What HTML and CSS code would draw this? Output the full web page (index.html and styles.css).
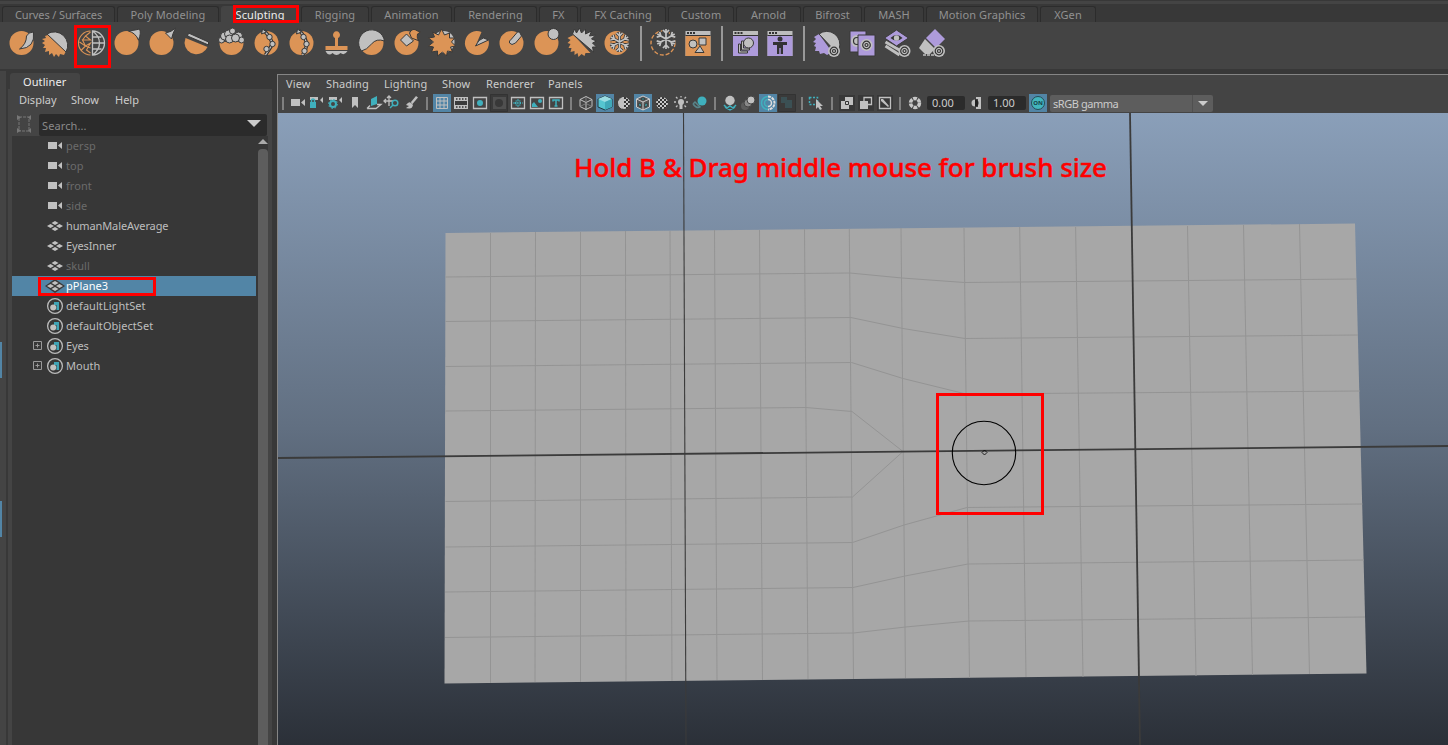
FILE: index.html
```html
<!DOCTYPE html>
<html lang="en"><head><meta charset="utf-8"><title>Sculpting workspace</title>
<link rel="stylesheet" href="styles.css"></head>
<body>
<svg class="defs" width="0" height="0">
<defs>
<pattern id="chk" width="4" height="4" patternUnits="userSpaceOnUse"><rect width="4" height="4" fill="#333"/><rect width="2" height="2" fill="#c8c8c8"/><rect x="2" y="2" width="2" height="2" fill="#c8c8c8"/></pattern>
<g id="ball"><circle r="12" class="o"/></g>
<g id="flake" fill="none"><path d="M0-10V10M-8.700-5L8.700 5M-8.700 5L8.700-5M-3-9L0-6 3-9M-3 9L0 6 3 9M-9.300-1.900L-5.200-3-6.300-7.100M9.300 1.900L5.200 3 6.300 7.100M-9.300 1.900L-5.200 3-6.300 7.100M9.300-1.900L5.200-3 6.300-7.100"/></g>
<g id="target"><circle r="6" class="g"/><circle r="3.800" class="n"/><circle r="1.500" class="n"/></g>
<g id="win"><rect x="-12.500" y="-12" width="25" height="25" fill="#bdbdbd"/><path d="M-12.500-7.500h25" stroke="#333"/><path d="M-11-10h2M-8-10h2M-5-10h2" stroke="#333" stroke-width="2"/></g>
<g id="cam"><path d="M0 0h9v7H0zM14 0v7l-4-3.500z" class="g"/></g>
<g id="mesh"><path d="M8 0l3.500 2L8 4 4.500 2zM3.500 3L7 5 3.500 7 0 5zM12.500 3L16 5l-3.500 2L9 5zM8 6l3.500 2L8 10 4.500 8z" class="g"/></g>
<g id="set"><circle cx="8" cy="8" r="7.400" fill="none" stroke="#bbb" stroke-width="1.300"/><path d="M7 4h5v8H9.500V7H7z" fill="#3fa3b5"/><circle cx="6.200" cy="9.500" r="3" class="g"/></g>
</defs></svg>

<div class="app">
<div class="topline"></div>
<nav class="tabs">
<div class="t1">Curves / Surfaces</div><div class="t2">Poly Modeling</div><div class="t3 on">Sculpting</div><div class="t4">Rigging</div><div class="t5">Animation</div><div class="t6">Rendering</div><div class="t7">FX</div><div class="t8">FX Caching</div><div class="t9">Custom</div><div class="t10">Arnold</div><div class="t11">Bifrost</div><div class="t12">MASH</div><div class="t13">Motion Graphics</div><div class="t14">XGen</div>
</nav>

<div class="shelf">
<svg viewBox="-17.500 -17 35 34"><use href="#ball"/><path d="M12-11Q14 5-2 6Q5 1 5-7Q7-11 12-11Z" class="g k"/></svg>
<svg viewBox="-17 -17 35 34"><path d="M-8-8-11-7-10-5-14-4-11-2-14 0-11 2-13 5-10 5-11 9-7 8-7 12-4 10-2 14 0 11 3 14 4 11 8 12 10 8z" class="o"/><path d="M-9-9A13.500 13.500 0 0 1 10 9Z" class="g k"/></svg>
<svg viewBox="-17.500 -17 35 34"><path d="M-1-12A12 12 0 0 0-1 12M-1-11-6-7-1-3-9-3-6 3-1 0-5 7-1 10M-12-1-6 3-10 7M-6-7-9-3M-6 3-1 5" class="ol fine"/><path d="M1-12A12 12 0 0 1 1 12ZM1-6H10M1 0H13M1 6H10M1-12Q8-7 8 0T1 12" class="gl"/></svg>
<svg viewBox="-17.500 -17 35 34"><use href="#ball"/><path d="M2-12Q10-13 13-14Q15-10 12-3Q9-10 2-12Z" class="g k"/></svg>
<svg viewBox="-17.500 -17 35 34"><use href="#ball"/><path d="M4-10Q10-11 14-15Q11-9 10-4Z" class="g k"/></svg>
<svg viewBox="-17.500 -17 35 34"><path d="M-11-5 11 4A12 12 0 0 1-12 0Z" class="o"/><path d="M-8-10 12-1V2L-9-7Z" class="g k"/></svg>
<svg viewBox="-17.500 -17 35 34"><use href="#ball"/><path d="M-13-1-12-14H12L13-1Z" fill="#444"/><g class="g k"><circle cx="-10" cy="-3" r="3"/><circle cx="-7" cy="-7" r="4"/><circle cx="7" cy="-7" r="4"/><circle cx="10" cy="-3" r="3"/><circle cx="-3" cy="-9" r="4"/><circle cx="1" cy="-12" r="3"/><circle cx="-2" cy="-4" r="4"/><circle cx="4" cy="-5" r="4"/></g></svg>
<svg viewBox="-17.500 -17 35 34"><use href="#ball"/><path d="M-3-13Q4-6 6 1Q3 6-1 12" class="dark wide"/><path d="M-3-13Q4-6 6 1Q3 6-1 12" class="gl"/><g class="g k"><path d="M-4-14-5-9 0-11z"/><circle cx="3" cy="-6" r="2.700"/><circle cx="6" cy="1" r="2.700"/><circle cx="0" cy="6" r="2.700"/></g></svg>
<svg viewBox="-17.500 -17 35 34"><use href="#ball"/><path d="M-3-13Q3-8 5 0Q5 7 1 12" class="dark wide"/><path d="M-3-13Q3-8 5 0Q5 7 1 12" class="gl"/><g class="g k"><path d="M-4-14-5-9 0-11z"/><circle cx="2" cy="-6" r="2.700"/><circle cx="5" cy="1" r="2.700"/><circle cx="3" cy="8" r="2.700"/></g></svg>
<svg viewBox="-17.500 -17 35 34"><path d="M-1.500-5A3.500 3.500 0 1 1 1.500-5V3H11V7H-11V3H-1.500Z" class="o"/><path d="M-11 8H11Q8 13 4 10Q0 14-4 10Q-8 14-11 8Z" class="g"/></svg>
<svg viewBox="-17.500 -17 35 34"><use href="#ball"/><path d="M-10 8A13 13 0 1 1 13-2Q5-5 0 1T-10 8Z" class="g k"/></svg>
<svg viewBox="-17.500 -17 35 34"><use href="#ball"/><path d="M0-9 7-2 0 3-6-3Z" class="g k"/><path d="M3-10Q6-16 11-12L14-11 11-9Q10-3 13-2L5-5Z" class="o k"/></svg>
<svg viewBox="-17.500 -17 35 34"><circle r="11" cx="2" cy="-1" class="g"/><path d="M0-14 3-8 8-10 8-5 13-5 10-1 14 3 9 4 11 9 6 8 5 13 1 9-4 13-4 8-10 9-8 4-13 3-8-1-13-5-7-6-9-11-3-8Z" class="o k"/></svg>
<svg viewBox="-17.500 -17 35 34"><path d="M5-11A12 12 0 1 0 12-3L-1 3Z" class="o"/><path d="M-1 3Q2-4 7-5L12-3Z" class="g k"/></svg>
<svg viewBox="-17.500 -17 35 34"><use href="#ball"/><path d="M8-11 10-7 4 0Q0 3-2 0-3-2 0-4L6-11Z" class="g k"/></svg>
<svg viewBox="-17.500 -17 35 34"><use href="#ball"/><circle cx="7" cy="-9" r="5.500" class="g k"/></svg>
<svg viewBox="-17.500 -17 35 34"><path d="M-8-8-14-5-11-3-14 0-11 1-13 5-10 5-11 9-7 8-7 12-4 10-3 14 0 11 3 13 4 10 9 10Z" class="o"/><path d="M-9-9-7-14-5-10-2-15 0-10 4-14 4-9 10-12 8-7 14-8 10-4 15-2 11 0 15 4 11 4 12 9Z" class="g k"/></svg>
<svg viewBox="-17.500 -17 35 34"><use href="#ball"/><use href="#flake" x="3" y="-1" stroke="#333" stroke-width="3"/><use href="#flake" x="3" y="-1" stroke="#c3c3c3" stroke-width="1.500"/></svg>
<i class="s s1"></i>
<svg class="w34" viewBox="-17 -17 34 34"><circle cx="-2" cy="0" r="12" class="ol" stroke-dasharray="4 2"/><use href="#flake" x="1" y="-4" stroke="#444" stroke-width="3.500"/><use href="#flake" x="1" y="-4" stroke="#c3c3c3" stroke-width="1.700"/></svg>
<svg class="w32" viewBox="-16 -17 32 34"><use href="#win"/><path d="M-12.500-7h25V13h-25z" class="o"/><g class="g k"><circle cx="-5" cy="1" r="4"/><path d="M1-5H8V2H1ZM2 3 6 9.500H-3Z"/></g></svg>
<i class="s s2"></i>
<svg class="w31" viewBox="-15.500 -17 31 34"><use href="#win"/><path d="M-12.500-7h25V13h-25z" class="p"/><path d="M-7 10V1H-5V8H2V10ZM-4 7V-2H-2V5H4V7Z" class="g k"/><circle cx="3" cy="0" r="5" class="g k"/></svg>
<svg class="w38" viewBox="-19 -17 38 34"><use href="#win"/><path d="M-12.500-7h25V13h-25z" class="p"/><circle cy="-4" r="2.500" fill="#333"/><path d="M-7-1H7V2H3V11H.700V5H-.700V11H-3V2H-7Z" fill="#333"/></svg>
<i class="s s3"></i>
<svg class="w38" viewBox="-18 -17 38 34"><path d="M-8-9-13-6-11-4-14-1-11 0-13 3-11 4-12 8-8 8-7 11-3 10 0 12 5 9Z" class="p"/><path d="M-8-9A13 13 0 0 1 12 6L8 8Z" class="g k"/><use href="#target" x="7" y="8"/></svg>
<svg class="w32" viewBox="-15 -17 32 34"><path d="M-12-12H4V9H-12Z" class="p k"/><circle cx="-5" cy="-2" r="6" class="g"/><circle cx="-5" cy="-2" r="3.500" class="n"/><path d="M-4-8H13V13H-4Z" class="p k"/><use href="#target" x="4.500" y="2"/></svg>
<svg viewBox="-17.500 -17 35 34"><path d="M-11-1 8 10M-11 3 3 12" stroke="#c0c0c0" stroke-width="3"/><path d="M0-13 12-5 0 3-12-5Z" class="p k"/><path d="M-6-5Q0-11 6-5Q0 0-6-5" fill="#333"/><circle cy="-5" r="2.700" class="g"/><use href="#target" x="8" y="8"/></svg>
<svg class="w38" viewBox="-18 -17 38 34"><path d="M3-14 13-4 4 5-6-5Z" class="p"/><path d="M-7-4 3 6-2 11H-7L-13 5Z" class="g"/><path d="M-9 12H4" class="gl" stroke-dasharray="3 1"/><use href="#target" x="7" y="8"/></svg>
</div>

<div class="main">
<div class="sliver"><b class="b1"></b><b class="b2"></b></div>
<aside class="outliner">
<div class="otitle">Outliner</div>
<div class="obody">
<div class="omenu"><span class="d1">Display</span><span class="d2">Show</span><span>Help</span></div>
<div class="search"><svg width="27" height="22"><path d="M7 3h10v14H7z" fill="none" stroke="#777" stroke-dasharray="3 1"/><path d="M5 1l4 2.500-4 2.500zM19 1v5l-3-2.500zM5 14l4 2.500-4 2.500zM19 14v5l-3-2.500z" fill="#777"/></svg><div class="box">Search...<i></i></div></div>
<div class="olist"><div class="rows">
<div class="row dim"><svg><use href="#cam" x="1" y="6"/></svg>persp</div>
<div class="row dim"><svg><use href="#cam" x="1" y="6"/></svg>top</div>
<div class="row dim"><svg><use href="#cam" x="1" y="6"/></svg>front</div>
<div class="row dim"><svg><use href="#cam" x="1" y="6"/></svg>side</div>
<div class="row tight"><svg><use href="#mesh" y="5"/></svg>humanMaleAverage</div>
<div class="row tight"><svg><use href="#mesh" y="5"/></svg>EyesInner</div>
<div class="row dim"><svg><use href="#mesh" y="5"/></svg>skull</div>
<div class="row sel"><svg><path d="M8 3 18 10 8 17-2 10Z" fill="#3a3a3a"/><use href="#mesh" y="5"/></svg>pPlane3</div>
<div class="row"><svg><use href="#set" y="2"/></svg>defaultLightSet</div>
<div class="row"><svg><use href="#set" y="2"/></svg>defaultObjectSet</div>
<div class="row tight"><svg><path d="M-13.500 5.500h8v8h-8zM-11.500 9.500h4M-9.500 7.500v4" class="plus"/><use href="#set" y="2"/></svg>Eyes</div>
<div class="row"><svg><path d="M-13.500 5.500h8v8h-8zM-11.500 9.500h4M-9.500 7.500v4" class="plus"/><use href="#set" y="2"/></svg>Mouth</div>
</div><div class="scroll"><i></i><b></b></div></div>
</div>
</aside>

<section class="view">
<div class="vmenu"><span class="m1">View</span><span class="m2">Shading</span><span class="m3">Lighting</span><span class="m4">Show</span><span class="m5">Renderer</span><span class="m6">Panels</span></div>
<div class="vtools">
<i class="sep first"></i>
<svg><use href="#cam" x="3" y="6"/></svg>
<svg><path d="M3 4h8v3H3zM16 4v6l-3-3z" class="g"/><path d="M3 9h6v6H3z" fill="#3fb0bd"/><path d="M4.500 9V7q1.500-2 3 0v2" class="cl"/></svg>
<svg><path d="M3 4h8v3H3zM16 4v6l-3-3z" class="g"/><circle cx="7" cy="11" r="3" fill="#444" stroke="#3fb0bd" stroke-width="2"/><circle cx="7" cy="11" r="4.500" fill="none" stroke="#3fb0bd" stroke-dasharray="1.500 2"/></svg>
<svg><path d="M7 4h6v11l-3-3-3 3z" class="g"/></svg>
<svg><path d="M7 13V6l6-3v8z" fill="#3fb0bd"/><path d="M3 15.500h9l5-4h-4M3 15.500l3-3" class="gl"/></svg>
<svg><path d="M1 8h9M6 3v10M3 6 1 8l2 2M4 5l2-2 2 2" class="gl"/><circle cx="12" cy="10" r="2.800" class="cl"/><path d="M10 12 7 15" class="cl"/></svg>
<svg><path d="M9 9 14 3l2 1.500-6 7z" class="g"/><path d="M4 12q3-4 5-2l2 2q-1 4-4 3.500T4 15l3-2z" class="g"/></svg>
<i class="sep"></i>
<svg class="act"><path d="M4.500 4.500h11v11h-11zM8 4v12M12 4v12M4 8h12M4 12h12" class="gl thinl"/></svg>
<svg><path d="M3 4h14v12H3z" class="g"/><path d="M4 8h12v4H4z" fill="#3b3b3b"/><path d="M5 6h11M5 14h11" stroke="#333" stroke-width="1.500" stroke-dasharray="1.500 1.500"/></svg>
<svg><path d="M3.500 4.500h13v11h-13z" class="gl"/><circle cx="10" cy="10" r="3" fill="#3fb0bd"/></svg>
<svg><path d="M1.500 1.500h17v17h-17z" fill="#3a3a3a" stroke="#333"/><path d="M4 4h13v12H4z" fill="#505050"/><circle cx="10" cy="10" r="4" fill="#383838"/></svg>
<svg><path d="M3.500 4.500h13v11h-13z" class="gl"/><path d="M5 10h10M10 6v8M7.500 8h5v4h-5z" fill="none" stroke="#3fb0bd" stroke-dasharray="2 1"/></svg>
<svg><path d="M3.500 4.500h13v11h-13z" class="gl"/><circle cx="13" cy="8" r="2" fill="#3fb0bd"/><path d="M5 14V11l2-2 4 5z" fill="#3fb0bd"/></svg>
<svg><path d="M3.500 4.500h13v11h-13z" class="gl"/><path d="M7 8.500V7h6v1.500M10 7v6M8.500 13h3" fill="none" stroke="#3fb0bd" stroke-width="1.500"/></svg>
<i class="sep"></i>
<svg><path d="M4 6.500 10 3.500l6 3v7l-6 3-6-3zM4 6.500l6 3 6-3M10 9v8" fill="none" stroke="#c0c0c0"/><path d="M10 4v6M4 13.500l6-3 6 3" fill="none" stroke="#888" stroke-width=".800"/></svg>
<svg class="act"><path d="M3 6l7-3 7 3v8l-7 3-7-3z" fill="#55c5d0" stroke="#22383f"/><path d="M3 6l7-3 7 3-7 3z" fill="#9bdde3"/><path d="M10 9v8l7-3V6z" fill="#3fa8b8"/></svg>
<svg><circle cx="10" cy="10" r="6" fill="url(#chk)"/><path d="M10 4a6 6 0 0 0 0 12z" class="g"/></svg>
<svg class="act"><path d="M3.500 6l6.500-3 6.500 3v8l-6.500 3-6.500-3z" fill="#555" stroke="#ccc"/><path d="M3.500 6l6.500 3 6.500-3M10 9v8" fill="none" stroke="#ccc"/><path d="M8 6l2-1 2 1-2 1zM6 10l2 1v3l-2-1zM14 10l-2 1v3l2-1z" fill="#4bbac7" stroke="#222" stroke-width=".600"/></svg>
<svg><circle cx="10" cy="10" r="6" fill="url(#chk)"/></svg>
<svg><circle cx="10" cy="9" r="3" class="g"/><path d="M8.500 11h3v5h-3z" class="g"/><path d="M10 3v1.500M5 4l1.500 1.500M15 4l-1.500 1.500M3 9h2M17 9h-2M5 14l1.500-1.500M15 14l-1.500-1.500" class="gl"/></svg>
<svg><circle cx="12" cy="8" r="4.500" fill="#3fb0bd"/><path d="M3 11l2-2 5 5q-3 2-7-3" fill="none" stroke="#58858b" stroke-width="1.500"/></svg>
<i class="sep"></i>
<svg><path d="M4 12l3 3 3-2 3 2 3-3M5 14l5 3 5-3" class="cl"/><circle cx="10" cy="7.500" r="4.700" class="g"/></svg>
<svg><circle cx="6" cy="13" r="4" fill="#5c5c5c"/><circle cx="9" cy="10" r="4" fill="#888" stroke="#444"/><circle cx="12" cy="7" r="4" class="g" stroke="#444"/></svg>
<svg class="act"><path d="M10 3.500a6.500 6.500 0 0 0 0 13" class="cl"/><path d="M10 3.500a6.500 6.500 0 0 1 0 13" stroke="#ddd" fill="none" stroke-width="2" stroke-dasharray="3 .800"/><path d="M10 6.500a3.500 3.500 0 0 0 0 7" class="cl"/><path d="M10 6.500a3.500 3.500 0 0 1 0 7" stroke="#ddd" fill="none" stroke-width="1.500"/></svg>
<svg><path d="M1.500 1.500h17v17h-17z" fill="#3a3a3a" stroke="#333"/><path d="M4 4h6v3h5v8H8V10H4z" fill="#3b5054"/></svg>
<i class="sep"></i>
<svg><path d="M2.500 4.500h8v7h-8z" class="cl" stroke-dasharray="2 1.500"/><path d="M9 6l7 7-3 0 2 3-2 1-2-3-2 2z" class="g"/></svg>
<i class="sep"></i>
<svg><path d="M2 2h16v16H2z" fill="#383838"/><path d="M8 4h8v8H8zM4 8h8v8H4z" class="g"/><path d="M8.500 8.500h3v3h-3z" fill="#ccc" stroke="#333"/></svg>
<svg><path d="M2 2h16v16H2z" fill="#383838"/><path d="M8 4.500h7.500v7H8z" class="gl"/><path d="M4 8h8v8H4z" class="g"/></svg>
<svg><path d="M2 2h16v16H2z" fill="#383838"/><path d="M4.500 4.500h11v11h-11z" class="gl"/><path d="M6 6h2l6 7-1 1-7-6z" class="g"/></svg>
<i class="sep"></i>
<svg><circle cx="10" cy="10" r="4.500" fill="none" stroke="#c8c8c8" stroke-width="3.500" stroke-dasharray="3.800 .900"/></svg>
<div class="num">0.00</div>
<svg class="con"><path d="M10 4h5v12h-5v-2h2V6h-2z" class="g"/><path d="M9 6.500a3.500 3.500 0 0 1 0 7z" fill="#222"/><path d="M9 6.500a3.500 3.500 0 0 0 0 7z" class="g"/></svg>
<div class="num">1.00</div>
<div class="onbtn"><span>ON</span></div>
<div class="combo"><span>sRGB gamma</span><i></i></div>
</div>

<svg class="canvas" viewBox="278 113 1170 632">
<defs><linearGradient id="sky" x1="0" y1="0" x2="0" y2="1"><stop offset="0" stop-color="#8a9fb9"/><stop offset=".5" stop-color="#616f81"/><stop offset="1" stop-color="#2b3038"/></linearGradient></defs>
<path d="M278 113h1170v632H278z" fill="url(#sky)"/>
<path d="M445.500 233 1355 223.500 1366.500 673.500 444.500 683.500Z" fill="#a7a7a7"/>
<path d="M490.500 233V683M535.500 232 535 682M580.500 232V682M625.500 231 626 681M670 231 672 681M714.500 230 717 680M759.500 230 762.500 680M804.500 229 808 679M849.300 229 853.500 679M901 228 905.500 678M964 228 969.500 678M1019.700 227 1026 677M1075.600 227 1083 677M1131.500 226 1139.500 676M1187.500 226 1196 676M1243.500 225 1252.500 675M1299.500 224 1309.500 674" class="wire"/>
<path d="M445.500 277 850 273 902 278 964.500 282.500 1357 279M445.500 321.500 851 317.500 903 328.500 965 338.500 1358 335M445.500 366.500 851.500 362.500 903 378.500 966 394 1360 391M445.500 411 806 407.500 852 411.500 903 451.500 852.500 497 445.500 501.500M445.500 547 852.500 542.500 904 525 967 507.500 1362.500 504M445 592 853 587.500 905 576 968 564 1364 560M445 637.500 853.500 633 905.500 627 969 621 1365 617" class="wire"/>
<path d="M278 458 1448 446" class="axis"/><path d="M1130 113 1140 745" class="axis"/><path d="M683.500 113 686 745" class="axis thin"/>
<circle cx="984" cy="453" r="31.700" fill="none" stroke="#000" stroke-width="1.100"/><path d="M984.500 450 987 452.500 984.500 455 982 452.500Z" fill="none" stroke="#000" stroke-width=".8"/>
<path d="M937.500 394.500h105v119h-105z" fill="none" stroke="#f00" stroke-width="3"/>
<text x="574" y="177" textLength="533" class="tip">Hold B &amp; Drag middle mouse for brush size</text>
</svg>
</section>
</div>
<div class="mark k1"></div><div class="mark k2"></div><div class="mark k3"></div>
</div>
</body></html>
```

FILE: styles.css
```css
*{box-sizing:border-box}
body{margin:0;background:#383838;font:11px "Noto Sans",sans-serif;color:#bebebe;overflow:hidden}
.defs{position:absolute}
.app{position:relative;width:1448px;height:745px;display:flex;flex-direction:column}
.topline{height:4px;background:#444;border-top:1px solid #383838;flex:none}
.tabs{height:18px;padding:2px 0 0 2px;display:flex;gap:2px;flex:none;background:#383838}
.tabs div{height:16px;line-height:15px;text-align:center;white-space:nowrap;background:#3b3b3b;color:#919191;border:1px solid #2c2c2c;border-bottom:0;border-radius:3px 3px 0 0;letter-spacing:.1px}
.tabs .t1{letter-spacing:-.12px}
.tabs .on{background:#444;color:#eee;border-color:#444}
.t1{width:113px}.t2{width:102px}.t3{width:78px}.t4{width:68px}.t5{width:81px}.t6{width:83px}.t7{width:39px}.t8{width:86px}.t9{width:66px}.t10{width:65px}.t11{width:59px}.t12{width:60px}.t13{width:112px}.t14{width:56px}
.shelf{height:47px;flex:none;background:#444;display:flex;padding:4px 0 0 4px}
.shelf svg{width:35px;height:34px;flex:none;overflow:visible}
.shelf .w34{width:34px}.shelf .w32{width:32px}.shelf .w31{width:31px}.shelf .w38{width:38px}
.s{display:flex;justify-content:center;height:35px}
.s:before{content:"";width:2px;height:35px;background:#999}
.s1{width:14px}.s2{width:16px}.s3{width:10px}
.o{fill:#dc9456}.g{fill:#c0c0c0}.p{fill:#ae9bdb}.k{stroke:#393939;stroke-width:1}
.n{fill:none;stroke:#333;stroke-width:1.2}
.ol{fill:none;stroke:#dc9456;stroke-width:1.4}
.fine{stroke-width:1.1}
.gl{fill:none;stroke:#c0c0c0;stroke-width:1.3}
.thinl{stroke-width:1}
.cl{fill:none;stroke:#3fb0bd;stroke-width:1.5}
.dark{fill:none;stroke:#333;stroke-width:2}
.wide{stroke-width:3.5}
.main{flex:1;display:flex;padding-top:2px;min-height:0}
.sliver{width:6px;background:#444;margin-right:2px;display:flex;flex-direction:column;align-items:flex-start;padding-top:271px;flex:none}
.sliver b{width:2px;height:36px;background:#5285a6}
.sliver .b2{margin-top:123px}
.outliner{width:264px;flex:none;display:flex;flex-direction:column;padding-top:2px}
.otitle{margin-left:2px;width:70px;height:16px;background:#444;border-radius:3px 3px 0 0;color:#eee;padding-left:13px;line-height:18px;letter-spacing:.1px}
.obody{flex:1;background:#444;display:flex;flex-direction:column;min-height:0}
.omenu{display:flex;height:25px;line-height:22px;padding-left:11px;color:#ccc}
.d1{width:52px}.d2{width:44px}
.search{display:flex;padding-left:4px;height:22px}
.search svg{flex:none}
.box{width:228px;height:22px;background:#2b2b2b;border-radius:2px;color:#8a8a8a;line-height:24px;padding:0 6px 0 3px;display:flex;justify-content:space-between;letter-spacing:.1px}
.box i{border:7px solid transparent;border-top-color:#ccc;border-bottom:0;height:7px;margin-top:6px}
.olist{flex:1;margin-left:4px;width:256px;background:#373737;display:flex}
.rows{width:244px}
.row{height:20px;line-height:20px;padding-left:35px;display:flex;gap:3px;letter-spacing:.05px}
.row svg{width:16px;height:20px;overflow:visible;flex:none}
.tight{letter-spacing:-.12px}
.dim{color:#6b6b6b}.sel{background:#5285a6;color:#fff}
.plus{fill:none;stroke:#999}
.scroll{margin-left:2px;width:10px;display:flex;flex-direction:column;align-items:center}
.scroll i{border:5px solid transparent;border-bottom-color:#aaa;border-top:0;margin:3px 0 5px}
.scroll b{width:10px;flex:1;background:#5d5d5d;border-radius:4px 4px 0 0}
.view{margin:3px 0 0 5px;flex:1;border:solid #858585;border-width:1px 0 0 1px;background:#444;display:flex;flex-direction:column;min-width:0;min-height:0}
.vmenu{height:18px;line-height:17px;display:flex;color:#ccc;padding-left:8px;letter-spacing:.1px}
.m1{width:40px}.m2{width:58px}.m3{width:58px}.m4{width:44px}.m5{width:62px}
.vtools{display:flex;height:20px;align-items:center;flex:none}
.vtools svg{width:19px;height:20px;flex:none}
.vtools .act{background:linear-gradient(#5285a6,#5285a6) 1px 1px/18px 18px no-repeat}
.sep{width:11px;height:13px;display:flex;justify-content:center;flex:none}
.sep:before{content:"";width:2px;height:13px;background:#808080}
.first{width:10px}
.num{width:38px;height:14px;background:#2b2b2b;border-radius:2px;line-height:14px;padding-left:5px;color:#ccc;margin-left:3px}
.vtools .con{width:19px;margin-left:1px}
.onbtn{width:18px;height:18px;background:#5285a6;margin-left:3px;display:flex;align-items:center;justify-content:center}
.onbtn span{width:14px;height:14px;border-radius:50%;background:#42b5bd;border:1px solid #254c55;font-size:6px;line-height:12px;text-align:center;color:#173e46;font-weight:bold}
.combo{width:163px;height:17px;background:#5d5d5d;border-radius:2px;margin-left:3px;display:flex;color:#ccc;line-height:18px;letter-spacing:-.45px}
.combo span{width:143px;padding-left:3px;border-right:1px solid #505050}
.combo i{border:5px solid transparent;border-top-color:#ccc;border-bottom:0;height:5px;margin:6px 0 0 5px}
.canvas{width:1170px;height:632px;flex:none;display:block}
.wire{fill:none;stroke:#949494;stroke-width:1}
.axis{fill:none;stroke:#3b3b3b;stroke-width:1.8}.thin{stroke-width:1.1}
.tip{font:500 26px "Noto Sans",sans-serif;fill:#f00;stroke:#f00;stroke-width:.4}
.mark{position:absolute;border:3px solid #f00}
.k1{left:233px;top:5px;width:66px;height:18px}
.k2{left:74px;top:25px;width:37px;height:43px}
.k3{left:38px;top:277px;width:118px;height:19px}
```
